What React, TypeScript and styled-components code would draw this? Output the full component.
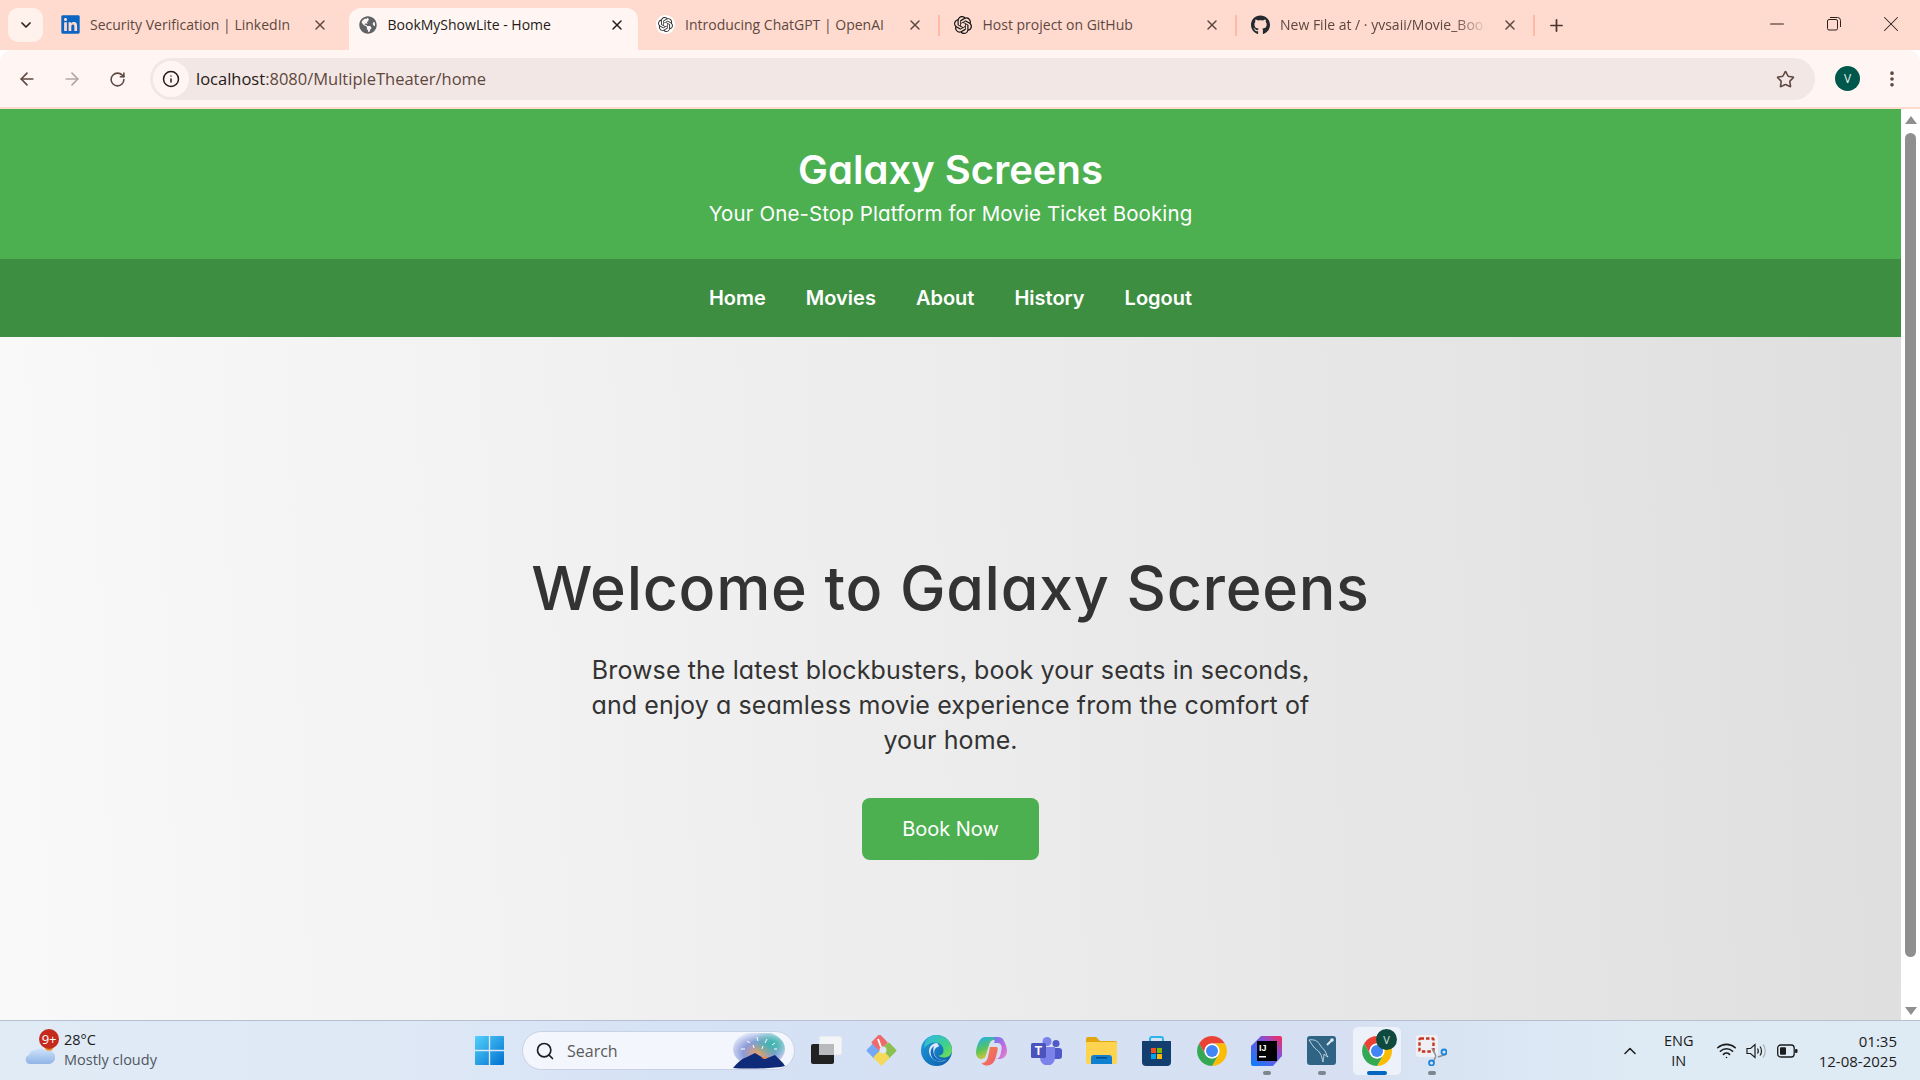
import React from "react";
import styled, { createGlobalStyle } from "styled-components";
import { FaLinkedin, FaGithub, FaGlobeAmericas } from "react-icons/fa";
import { SiOpenai } from "react-icons/si";
import { ArrowLeft, ArrowRight, RotateCw, Info, Star, EllipsisVertical, Search, ChevronUp, ChevronDown, X, Plus, Minus, Wifi } from "lucide-react";

const Global = createGlobalStyle`
  html, body { margin: 0; padding: 0; overflow: hidden; }
  body { font-family: "Open Sans", "Liberation Sans", sans-serif; }
  * { box-sizing: border-box; }
`;

const POP = `"Inter", "Noto Sans", sans-serif`;

const Screen = styled.div`
  width: 1920px; height: 1080px; display: flex; flex-direction: column; overflow: hidden; background: #fff;
`;
const TabStrip = styled.div`
  height: 50px; flex: none; background: #ffdbcf; display: flex; align-items: stretch; padding-left: 8px;
`;
const TabSearchBtn = styled.div`
  width: 35px; height: 34px; margin-top: 8px; margin-right: 4px; border-radius: 10px; background: #fff1ec;
  display: flex; align-items: center; justify-content: center; color: #33201b; flex: none;
`;
const Tab = styled.div<{ $active?: boolean; $sep?: boolean }>`
  position: relative; width: 297.5px; flex: none; display: flex; align-items: center; padding: 0 17px 0 14px;
  color: ${p => (p.$active ? "#241a17" : "#5e4740")};
  font-size: 14px;
  ${p => p.$active && `
    &::before { content: ""; position: absolute; left: 4px; right: 4px; top: 8px; bottom: 0; background: #fff6f3; border-radius: 12px 12px 0 0; z-index: 0; }
  `}
  ${p => p.$sep && `
    &::after { content: ""; position: absolute; right: 0; top: 15px; height: 21px; width: 2px; background: #ffb9a6; }
  `}
`;
const TabIcon = styled.span<{ $c?: string; $bg?: string }>`
  position: relative; width: 19px; height: 19px; flex: none; display: flex; align-items: center; justify-content: center;
  color: ${p => p.$c || "#000"}; background: ${p => p.$bg || "transparent"}; border-radius: 50%;
  margin-top: -1px;
`;
const TabTitle = styled.span<{ $fade?: boolean }>`
  position: relative; flex: 1; margin-left: 10px; white-space: nowrap; padding-bottom: 1px;
  ${p => p.$fade && `flex: none; width: 208px; mask-image: linear-gradient(90deg, #000 84%, transparent 100%); margin-right: auto;`}
`;
const TabClose = styled.span<{ $active?: boolean }>`
  position: relative; flex: none; width: 16px; height: 16px; display: flex; align-items: center; justify-content: center;
  color: ${p => (p.$active ? "#241a17" : "#5e4740")};
`;
const NewTab = styled.div`
  width: 20px; margin-left: 12px; display: flex; align-items: center; justify-content: center; color: #4d342c;
`;
const WinControls = styled.div`
  margin-left: auto; display: flex; align-items: center; color: #2e211e; padding-right: 22px; padding-bottom: 3px; gap: 43px;
`;
const WinBtn = styled.span`
  width: 14px; height: 14px; display: flex; align-items: center; justify-content: center;
  svg { flex: none; }
`;
const Toolbar = styled.div`
  height: 57px; flex: none; background: #fff6f3; border-radius: 12px 12px 0 0; display: flex; align-items: center; padding: 1px 0 0 17px;
`;
const ToolBtn = styled.span<{ $dim?: boolean; $gap?: number }>`
  width: 20px; height: 20px; flex: none; display: flex; align-items: center; justify-content: center;
  margin-left: ${p => p.$gap || 0}px;
  color: ${p => (p.$dim ? "#b5a5a0" : "#5e4740")};
`;
const Omnibox = styled.div`
  width: 1665px; height: 42px; margin-left: 23px; border-radius: 21px; background: #f2e7e5; display: flex; align-items: center; padding: 0 20px 0 3px; flex: none;
`;
const InfoChip = styled.span`
  width: 36px; height: 36px; border-radius: 50%; background: #fff6f3; display: flex; align-items: center; justify-content: center; color: #241a17; flex: none;
`;
const Url = styled.div`
  margin-left: 7px; padding-bottom: 1px; font-size: 16.5px; color: #5e4740; white-space: nowrap; flex: 1;
  b { font-weight: 400; color: #241a17; }
`;
const Avatar = styled.span`
  width: 25px; height: 25px; margin: -2px 0 0 20px; border-radius: 50%; background: #00574b; color: #e3f3ee; font-size: 12px; display: flex; align-items: center; justify-content: center; flex: none;
`;
const ToolGap = styled.div`
  height: 2px; flex: none; background: #ffdbcf;
`;
const PageRow = styled.div`
  flex: 1; display: flex; min-height: 0;
`;
const Page = styled.div`
  flex: 1; display: flex; flex-direction: column; min-width: 0; font-family: ${POP}; font-feature-settings: "cv11" 1, "ss03" 1;
`;
const Header = styled.header`
  height: 150px; flex: none; background: #4caf50; color: #fff; text-align: center; padding-top: 33px;
`;
const Brand = styled.h1`
  margin: 0; font-size: 40px; line-height: 56px; font-weight: 600; letter-spacing: 0;
`;
const Tagline = styled.p`
  margin: 1px 0 0; font-size: 20.500px; line-height: 30px; font-weight: 400; letter-spacing: 0.1px;
`;
const Nav = styled.nav`
  height: 78px; flex: none; background: #3e8e41; display: flex; align-items: center; justify-content: center; gap: 40px;
`;
const NavLink = styled.a`
  color: #fff; font-size: 20px; font-weight: 600; letter-spacing: 0; line-height: 30px;
`;
const Main = styled.main`
  flex: 1; background: linear-gradient(88deg, #f9f9f9 0%, #dfdfdf 100%); display: flex; flex-direction: column; align-items: center; justify-content: center; color: #333; padding-top: 48px;
`;
const Hero = styled.h2`
  margin: 0; font-size: 61px; line-height: 84px; font-weight: 500; letter-spacing: 0.7px; color: #333;
`;
const Lead = styled.p`
  margin: 23px 0 0; font-size: 25px; line-height: 35px; text-align: center; font-weight: 400; color: #333; letter-spacing: 0.1px;
`;
const BookBtn = styled.a`
  margin-top: 40px; width: 177px; height: 62px; border-radius: 8px; background: #4caf50; color: #fff; font-size: 20px; display: flex; align-items: center; justify-content: center;
`;
const Scrollbar = styled.div`
  width: 19px; flex: none; background: #fff; display: flex; flex-direction: column; align-items: center; padding-top: 7px;
`;
const Arrow = styled.div<{ $down?: boolean }>`
  width: 0; height: 0; border-left: 6.5px solid transparent; border-right: 6.5px solid transparent;
  ${p => (p.$down ? "border-top: 8px solid #8f8f8f;" : "border-bottom: 8px solid #8f8f8f;")}
  flex: none;
`;
const Thumb = styled.div`
  width: 11px; height: 824px; margin: 9px 0 50px; border-radius: 6px; background: #8f8f8f; flex: none;
`;
const Taskbar = styled.footer`
  height: 60px; flex: none; border-top: 1px solid #b4bfd0; display: flex; align-items: center; position: relative;
  background: linear-gradient(90deg, #e0ebf6 0%, #dfe9f6 20%, #d5e1f5 35%, #d6e0f2 70%, #deebf5 85%, #deeaf4 100%);
  color: #1c1c1c;
`;
const Weather = styled.div`
  width: 475px; flex: none; display: flex; align-items: center; padding-left: 25px; gap: 9px;
`;
const WeatherIcon = styled.div`
  position: relative; width: 30px; height: 44px; flex: none; display: flex; align-items: flex-end; padding-bottom: 8px;
`;
const Badge = styled.span`
  position: absolute; left: 14px; top: 0; width: 20px; height: 20px; border-radius: 50%; background: #c42b1c; color: #fff; font-size: 13px; display: flex; align-items: center; justify-content: center; letter-spacing: -0.3px;
`;
const WeatherText = styled.div`
  font-size: 14.500px; line-height: 20px; margin-top: -2px;
  small { display: block; font-size: 14.500px; color: #4f5660; }
`;
const Center = styled.div`
  display: flex; align-items: center; flex: none;
`;
const StartSlot = styled.div`
  width: 47px; flex: none; display: flex;
`;
const SearchBox = styled.div`
  width: 273px; height: 39px; border-radius: 20px; background: #f3f6fd; border: 1px solid #c8d2e4; display: flex; align-items: center; padding-left: 12px; gap: 12px; color: #1f1f1f; font-size: 16px; position: relative; overflow: hidden; flex: none;
  span { color: #5a5a5a; }
  svg:last-child { position: absolute; right: 9px; bottom: 0; }
`;
const Slots = styled.div`
  margin-left: 4px; display: flex; align-items: center;
`;
const Slot = styled.div<{ $pip?: boolean; $active?: boolean }>`
  position: relative; width: 55px; height: 48px; display: flex; align-items: center; justify-content: center;
  ${p => p.$active && `&::before { content: ""; position: absolute; left: 4px; right: 3px; top: 0; bottom: 0; background: #edf1fa; border-radius: 5px; }`}
  ${p => p.$pip && `&::after { content: ""; position: absolute; bottom: 0; left: 50%; transform: translateX(-50%); height: 4px; border-radius: 2px; width: ${p.$active ? 20 : 8}px; background: ${p.$active ? "#0067c0" : "#7d8590"}; }`}
  svg { position: relative; }
`;
const SlotAvatar = styled.span`
  position: absolute; top: 2px; right: 7px; width: 21px; height: 21px; border-radius: 50%; background: #0f4a3e; color: #cfe3dc; font-size: 11px; display: flex; align-items: center; justify-content: center;
`;
const Tray = styled.div`
  margin-left: auto; display: flex; align-items: center; padding-right: 23px; font-size: 14.5px; color: #1c1c1c;
`;
const Lang = styled.div`
  width: 34px; margin-left: 22px; text-align: center; line-height: 20px; font-size: 14.500px; flex: none;
`;
const TrayIcons = styled.div`
  margin-left: 20px; display: flex; align-items: center; gap: 9px;
`;
const Clock = styled.div`
  margin-left: 21px; text-align: right; line-height: 20px; font-size: 15px;
`;

const Chrome = ({ size = 30 }: { size?: number }) => (
  <svg width={size} height={size} viewBox="2 2 44 44">
    <path fill="#ea4335" d="M43.05 13H24A11 11 0 0 0 14.47 29.5L5 13A22 22 0 0 1 43.05 13Z" />
    <path fill="#fbbc04" d="M24 46L33.53 29.5A11 11 0 0 0 24 13H43.05A22 22 0 0 1 24 46Z" />
    <path fill="#34a853" d="M5 13L14.47 29.5A11 11 0 0 0 33.53 29.5L24 46A22 22 0 0 1 5 13Z" />
    <circle cx="24" cy="24" r="11" fill="#fff" />
    <circle cx="24" cy="24" r="8.8" fill="#4285f4" />
  </svg>
);

const Cloud = () => (
  <svg width="30" height="24" viewBox="0 0 30 24">
    <defs>
      <linearGradient id="cl" x1="0" y1="0" x2="0" y2="1"><stop offset="0" stopColor="#cfe2fa" /><stop offset="1" stopColor="#8fb4e6" /></linearGradient>
    </defs>
    <circle cx="24" cy="6" r="4" fill="#f08a24" />
    <path fill="url(#cl)" d="M5 23a4.6 4.6 0 0 1-1-9 7 7 0 0 1 6-5 9 9 0 0 1 11 1 6.5 6.5 0 0 1 5 12.5c-.5.3-1 .5-2 .5z" />
  </svg>
);

const WindowsLogo = () => (
  <svg width="29" height="29" viewBox="0 0 29 29">
    <defs>
      <linearGradient id="wn" x1="0" y1="0" x2="1" y2="1"><stop offset="0" stopColor="#53d1fb" /><stop offset="1" stopColor="#0070d0" /></linearGradient>
    </defs>
    <path fill="url(#wn)" d="M1 0h12.8v13.8H0V1a1 1 0 0 1 1-1zM15.2 0H28a1 1 0 0 1 1 1v12.8H15.2zM0 15.2h13.8V29H1a1 1 0 0 1-1-1zM15.2 15.2H29V28a1 1 0 0 1-1 1H15.2z" />
  </svg>
);

const SearchArt = () => (
  <svg width="52" height="36" viewBox="0 0 52 36">
    <defs>
      <radialGradient id="sa" cx="0.5" cy="0.6" r="0.6"><stop offset="0" stopColor="#f2a060" /><stop offset="0.5" stopColor="#8a9bd8" /><stop offset="1" stopColor="#e8eefb" /></radialGradient>
      <radialGradient id="sb" cx="0.75" cy="0.35" r="0.4"><stop offset="0" stopColor="#36b7a8" /><stop offset="1" stopColor="#36b7a8" stopOpacity="0" /></radialGradient>
    </defs>
    <ellipse cx="26" cy="16" rx="26" ry="18" fill="url(#sa)" />
    <ellipse cx="26" cy="16" rx="26" ry="18" fill="url(#sb)" />
    <g stroke="#fff" strokeWidth="1">
      <path d="M14 8l3 2M24 4l1 4M34 6l-2 4M42 10l-3 2M8 16l4 0M20 12l1 3M30 13l-1 3M44 16l-3 0" />
    </g>
    <path fill="#0f2a78" d="M0 35 C4 30 8 26 14 24 L22 20 L32 26 L42 22 L50 30 L52 33 C40 36 10 36 0 35Z" />
    <path fill="#f08a3c" d="M28 25l4 1 3-1.500-3-1z" />
  </svg>
);

const TaskView = () => (
  <svg width="31" height="29" viewBox="0 0 31 29">
    <rect x="8" y="0" width="23" height="19" rx="2" fill="#f4f5f7" stroke="#dfe3ea" />
    <rect x="0" y="8" width="23" height="20" rx="2" fill="#222" />
    <rect x="8" y="8" width="15" height="11" fill="#b9babd" />
  </svg>
);

const GitApp = () => (
  <svg width="31" height="31" viewBox="0 0 31 31">
    <rect width="12" height="12" rx="1.500" fill="#76a9f5" transform="translate(0 15.500) rotate(-45)" />
    <rect width="12" height="12" rx="1.500" fill="#ef6a6a" transform="translate(13.500 -1) rotate(45)" />
    <rect width="12" height="12" rx="1.500" fill="#8cc152" transform="translate(22.500 7) rotate(45)" />
    <rect width="12" height="12" rx="1.500" fill="#f5d95a" transform="translate(15.500 14) rotate(45)" />
    <circle cx="17" cy="15" r="3.500" fill="#dfe7f6" />
    <path d="M12 4l3 8" stroke="#fff" strokeWidth="2" />
  </svg>
);

const Edge = () => (
  <svg width="31" height="31" viewBox="0 0 31 31">
    <defs>
      <linearGradient id="eg1" x1="0" y1="0" x2="1" y2="1"><stop offset="0" stopColor="#1f9fe0" /><stop offset="1" stopColor="#0c59a4" /></linearGradient>
      <linearGradient id="eg2" x1="0" y1="0" x2="1" y2="1"><stop offset="0" stopColor="#2fb6ee" /><stop offset="0.6" stopColor="#3fd08a" /><stop offset="1" stopColor="#7de04a" /></linearGradient>
    </defs>
    <circle cx="15.500" cy="15.500" r="15.500" fill="url(#eg1)" />
    <path fill="url(#eg2)" d="M4 7C7 2 11 0 15.500 0 24 0 31 7 31 15c0 5-4 7.500-8 7.500-3 0-5-1-5.500-2 3 0 5-2 5-5 0-5-4-8-8-8C10 7.500 6 9.500 3 13z" />
    <path fill="#dfe8f8" d="M15.500 8c-4.500.5-7.500 4-7.500 8 0 5 4 9.500 9.500 10.500 3 .4 6-.5 8-2-3 1-7 .7-9.500-1.500-3-2.500-3.800-7-1.500-9.500.8-1 2-2 3.500-2-.5-1.800-1-3-2.500-3.500z" />
    <path fill="#0f6cbf" d="M13 11c-3 2-4 5-3 9 1 3.500 4 6 8 6.500 2 .2 4-.3 6-1.500-4 .5-7.500-.5-9.500-3-2-2.500-3-7-1.500-11z" />
  </svg>
);

const Copilot = () => (
  <svg width="31" height="30" viewBox="0 0 31 30">
    <defs>
      <linearGradient id="cp1" x1="0.2" y1="0" x2="0.6" y2="1"><stop offset="0" stopColor="#20b0ea" /><stop offset="0.5" stopColor="#58c45c" /><stop offset="1" stopColor="#f3c42b" /></linearGradient>
      <linearGradient id="cp2" x1="0" y1="0" x2="1" y2="1"><stop offset="0" stopColor="#5f7df0" /><stop offset="0.6" stopColor="#c76ae0" /><stop offset="1" stopColor="#ea8ac0" /></linearGradient>
      <linearGradient id="cp4" x1="0" y1="0" x2="1" y2="1"><stop offset="0" stopColor="#f5863c" /><stop offset="1" stopColor="#ee5a7a" /></linearGradient>
    </defs>
    <path fill="url(#cp1)" d="M9 1h8c2 0 4 1 5 3h-4c-3 0-4 2-5 5l-3 10c-1 3-2.500 4-5 4-3 0-5-3-5-6.500C0 12 2 7 4 4c1.500-2 3-3 5-3z" />
    <path fill="url(#cp2)" d="M17 1h5c3 0 5 1.500 6 4 1.500 3 3 6 3 10 0 4-3 8-7 8h-4c2 0 4-2 4.500-4.500l1-5c.5-3 0-5-2-6-.5-.3-1-.5-1.500-.5H18C19 6 19 3 17 1z" />
    <path fill="url(#cp4)" d="M14 11h6.500c1 0 1.500 1.500 1 3.500l-1.500 6c-1 5-4 9-9 9h-1c-2 0-3.500-1-4.500-2.500C9 27 11 25 12 21z" />
  </svg>
);

const Teams = () => (
  <svg width="31" height="28" viewBox="0 0 31 28">
    <circle cx="25" cy="6.500" r="3.500" fill="#5059c9" />
    <rect x="20" y="11" width="11" height="11" rx="3" fill="#5059c9" />
    <circle cx="16" cy="4.500" r="4.500" fill="#7b83eb" />
    <path fill="#7b83eb" d="M9 10h15v11a7.500 7.500 0 0 1-15 0z" />
    <rect x="0" y="6" width="15" height="15" rx="1.500" fill="#4b53bc" />
    <text x="7.500" y="18" fontFamily="Liberation Sans" fontSize="12" fontWeight="700" fill="#fff" textAnchor="middle">T</text>
  </svg>
);

const Folder = () => (
  <svg width="31" height="27" viewBox="0 0 31 27">
    <path fill="#e2a60e" d="M0 2a2 2 0 0 1 2-2h8l4 4h15a2 2 0 0 1 2 2v6H0z" />
    <path fill="#fdd34f" d="M0 6a1 1 0 0 1 1-1h10l3 0h15.500A1.500 1.500 0 0 1 31 6.500V25a2 2 0 0 1-2 2H2a2 2 0 0 1-2-2z" />
    <path fill="#0f7fd1" d="M5 27v-6a3 3 0 0 1 3-3h15a3 3 0 0 1 3 3v6z" />
    <rect x="10" y="20" width="11" height="1.500" fill="#05487f" />
  </svg>
);

const Store = () => (
  <svg width="29" height="30" viewBox="0 0 29 30">
    <path d="M8 6V3a2 2 0 0 1 2-2h9a2 2 0 0 1 2 2v3" fill="none" stroke="#2fb3ec" strokeWidth="2" />
    <path fill="#123e70" d="M0 5h29v21a4 4 0 0 1-4 4H4a4 4 0 0 1-4-4z" />
    <rect x="9" y="12" width="5" height="5" fill="#f25022" />
    <rect x="15" y="12" width="5" height="5" fill="#7fba00" />
    <rect x="9" y="18" width="5" height="5" fill="#00a4ef" />
    <rect x="15" y="18" width="5" height="5" fill="#ffb900" />
  </svg>
);

const Idea = () => (
  <svg width="31" height="30" viewBox="0 0 31 30">
    <defs>
      <linearGradient id="ij" x1="0" y1="1" x2="1" y2="0"><stop offset="0" stopColor="#087cfa" /><stop offset="0.6" stopColor="#7a55e0" /><stop offset="1" stopColor="#fe2857" /></linearGradient>
    </defs>
    <path fill="url(#ij)" d="M10 0h19a2 2 0 0 1 2 2v17a2 2 0 0 1-1 2l-8 9H2a2 2 0 0 1-2-2V10z" />
    <rect x="6" y="5" width="20" height="20" fill="#000" />
    <text x="8" y="15" fontFamily="Liberation Sans" fontSize="9" fontWeight="700" fill="#fff">IJ</text>
    <rect x="8" y="20" width="7" height="1.500" fill="#fff" />
  </svg>
);

const Mysql = () => (
  <svg width="29" height="29" viewBox="0 0 29 29">
    <rect width="29" height="29" rx="3" fill="#2f6484" />
    <path fill="none" stroke="#cfdde8" strokeWidth="0.9" d="M2 4c5-1 9 1 11 5 2 3 5 5 6 8 .5 1.500 1 3 2 4-2-1-3-2-4-3 0 3-1 6-1 8-1-3-1-6-3-9-2-3-5-4-7-7-1-2-3-4-4-6z" />
    <path stroke="#dfe8ef" strokeWidth="2" d="M20 9l5-5" />
    <circle cx="25" cy="4" r="1.800" fill="#dfe8ef" />
  </svg>
);

const Snip = () => (
  <svg width="31" height="31" viewBox="0 0 31 31">
    <rect x="0" y="0" width="22" height="22" rx="3" fill="#eef0f4" />
    <rect x="3.500" y="3.500" width="14" height="13" rx="1" fill="none" stroke="#c8341f" strokeWidth="2.400" strokeDasharray="3.500 2" />
    <path d="M16 13l4 8M22 22l9-3M20 21l-3 6" stroke="#8a8f98" strokeWidth="1.600" fill="none" />
    <circle cx="28" cy="17" r="2.500" fill="none" stroke="#1d87d9" strokeWidth="1.800" />
    <circle cx="15.500" cy="28" r="2.500" fill="none" stroke="#1d87d9" strokeWidth="1.800" />
  </svg>
);

const WinRestore = () => (
  <svg width="14" height="14" viewBox="0 0 14 14" fill="none" stroke="currentColor" strokeWidth="1">
    <rect x="0.500" y="2.500" width="10" height="10.500" rx="1.500" />
    <path d="M3 .5h7.500a3 3 0 0 1 3 3V10" />
  </svg>
);

const Speaker = () => (
  <svg width="22" height="18" viewBox="0 0 22 18" fill="none" stroke="#1c1c1c" strokeWidth="1.200">
    <path d="M1 6.500h3.500L9 2.500v13L4.500 11.500H1z" />
    <path d="M11.500 6.500c1 1.500 1 3.500 0 5M14 4.500c2 2.500 2 6.500 0 9" />
    <path d="M17 2.500c3 3.500 3 9.500 0 13" stroke="#a9b3bd" />
  </svg>
);

const Battery = () => (
  <svg width="21" height="14" viewBox="0 0 21 14">
    <rect x="0.700" y="1" width="16.500" height="12" rx="3" fill="none" stroke="#1c1c1c" strokeWidth="1.300" />
    <rect x="3" y="3.300" width="6" height="7.400" rx="1" fill="#1c1c1c" />
    <rect x="18" y="5" width="2.500" height="4" rx="1" fill="#1c1c1c" />
  </svg>
);

const tabs = [
  { title: "Security Verification | LinkedIn", icon: <FaLinkedin size={21} />, c: "#0a66c2" },
  { title: "BookMyShowLite - Home", icon: <FaGlobeAmericas size={18} />, c: "#5f6368", active: true },
  { title: "Introducing ChatGPT | OpenAI", icon: <SiOpenai size={15} />, c: "#333", bg: "#fff", sep: true },
  { title: "Host project on GitHub", icon: <SiOpenai size={18} />, c: "#111", sep: true },
  { title: "New File at / · yvsaii/Movie_Boo", icon: <FaGithub size={20} />, c: "#24292f", sep: true, fade: true },
];

export default function App() {
  return (
    <Screen>
      <Global />
      <TabStrip>
        <TabSearchBtn><ChevronDown size={16} strokeWidth={2.6} /></TabSearchBtn>
        {tabs.map(t => (
          <Tab key={t.title} $active={t.active} $sep={t.sep}>
            <TabIcon $c={t.c} $bg={t.bg}>{t.icon}</TabIcon>
            <TabTitle $fade={t.fade}>{t.title}</TabTitle>
            <TabClose $active={t.active}><X size={16} strokeWidth={2.2} /></TabClose>
          </Tab>
        ))}
        <NewTab><Plus size={19} strokeWidth={2.2} /></NewTab>
        <WinControls>
          <WinBtn><Minus size={22} strokeWidth={1.1} /></WinBtn>
          <WinBtn><WinRestore /></WinBtn>
          <WinBtn><X size={26} strokeWidth={0.95} /></WinBtn>
        </WinControls>
      </TabStrip>
      <Toolbar>
        <ToolBtn><ArrowLeft size={20} strokeWidth={2} /></ToolBtn>
        <ToolBtn $dim $gap={25}><ArrowRight size={20} strokeWidth={2} /></ToolBtn>
        <ToolBtn $gap={25}><RotateCw size={17} strokeWidth={2.2} /></ToolBtn>
        <Omnibox>
          <InfoChip><Info size={18} strokeWidth={2} /></InfoChip>
          <Url><b>localhost</b>:8080/MultipleTheater/home</Url>
          <ToolBtn><Star size={19} strokeWidth={2} /></ToolBtn>
        </Omnibox>
        <Avatar>V</Avatar>
        <ToolBtn $gap={22}><EllipsisVertical size={20} strokeWidth={2.4} /></ToolBtn>
      </Toolbar>
      <ToolGap />
      <PageRow>
        <Page>
          <Header>
            <Brand>Galaxy Screens</Brand>
            <Tagline>Your One-Stop Platform for Movie Ticket Booking</Tagline>
          </Header>
          <Nav>
            {["Home", "Movies", "About", "History", "Logout"].map(n => <NavLink key={n}>{n}</NavLink>)}
          </Nav>
          <Main>
            <Hero>Welcome to Galaxy Screens</Hero>
            <Lead>
              Browse the latest blockbusters, book your seats in seconds,<br />
              and enjoy a seamless movie experience from the comfort of<br />
              your home.
            </Lead>
            <BookBtn>Book Now</BookBtn>
          </Main>
        </Page>
        <Scrollbar>
          <Arrow />
          <Thumb />
          <Arrow $down />
        </Scrollbar>
      </PageRow>
      <Taskbar>
        <Weather>
          <WeatherIcon><Cloud /><Badge>9+</Badge></WeatherIcon>
          <WeatherText>28°C<small>Mostly cloudy</small></WeatherText>
        </Weather>
        <Center>
          <StartSlot><WindowsLogo /></StartSlot>
          <SearchBox><Search size={20} strokeWidth={2} /><span>Search</span><SearchArt /></SearchBox>
          <Slots>
            <Slot><TaskView /></Slot>
            <Slot><GitApp /></Slot>
            <Slot><Edge /></Slot>
            <Slot><Copilot /></Slot>
            <Slot><Teams /></Slot>
            <Slot><Folder /></Slot>
            <Slot><Store /></Slot>
            <Slot><Chrome /></Slot>
            <Slot $pip><Idea /></Slot>
            <Slot $pip><Mysql /></Slot>
            <Slot $pip $active><Chrome /><SlotAvatar>V</SlotAvatar></Slot>
            <Slot $pip><Snip /></Slot>
          </Slots>
        </Center>
        <Tray>
          <ChevronUp size={20} strokeWidth={1.8} />
          <Lang>ENG<br />IN</Lang>
          <TrayIcons>
            <Wifi size={21} strokeWidth={1.8} />
            <Speaker />
            <Battery />
          </TrayIcons>
          <Clock>01:35<br />12-08-2025</Clock>
        </Tray>
      </Taskbar>
    </Screen>
  );
}
